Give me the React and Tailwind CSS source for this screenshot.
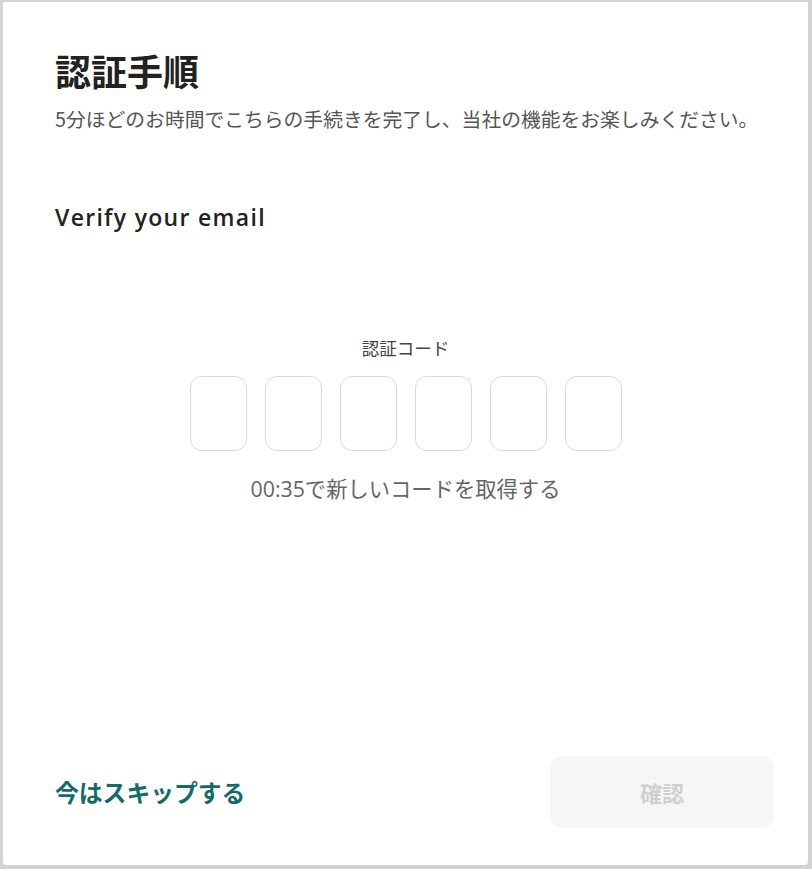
import React from 'react';

const jp = { fontFamily: '"Noto Sans CJK JP", sans-serif' };
const latin = { fontFamily: '"Open Sans", "Noto Sans CJK JP", sans-serif' };

const CodeBox = () => (
    <input
        type="text"
        maxLength={1}
        className="w-[57px] h-[75px] rounded-[12px] border border-[#d9d9d9] bg-white text-center text-2xl outline-none"
    />
);

export default function App() {
    return (
        <div className="w-[812px] h-[869px] bg-[#d3d3d3] pt-[2px] pl-[3px]">
            <div
                className="w-[805px] h-[863px] bg-white rounded-b-[4px] flex flex-col pt-[46px] pl-[52px] pr-[34px] pb-[37px]"
                style={jp}
            >
                <h1 className="text-[36px] leading-[44px] font-bold text-[#222]">認証手順</h1>
                <p className="mt-[13px] text-[19.8px] leading-[28px] text-[#555] whitespace-nowrap">
                    5分ほどのお時間でこちらの手続きを完了し、当社の機能をお楽しみください。
                </p>

                <h2 className="mt-[70px] text-[23px] leading-[28px] font-semibold tracking-[1.3px] text-[#222]" style={latin}>
                    Verify your email
                </h2>

                <div className="mt-[105px] flex flex-col items-center pr-[18px]">
                    <div className="text-[17.5px] leading-[24px] text-[#444]">認証コード</div>
                    <div className="mt-[16px] flex gap-[18px]">
                        {[0, 1, 2, 3, 4, 5].map(i => <CodeBox key={i} />)}
                    </div>
                    <div className="mt-[24px] text-[21.3px] leading-[28px] text-[#666]" style={latin}>
                        00:35で新しいコードを取得する
                    </div>
                </div>

                <div className="mt-auto flex items-center justify-between">
                    <button className="text-[23.8px] font-bold text-[#136b69]">今はスキップする</button>
                    <button
                        disabled
                        className="w-[224px] h-[72px] rounded-[12px] bg-[#f5f6f8] text-[22px] font-bold text-[#cfcfcf]"
                    >
                        確認
                    </button>
                </div>
            </div>
        </div>
    );
}
